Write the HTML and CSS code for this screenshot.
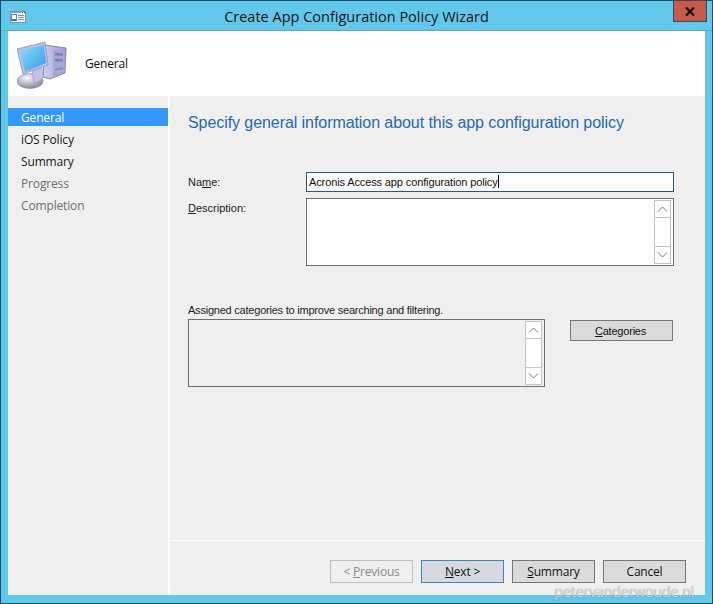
FILE: index.html
```html
<!DOCTYPE html>
<html lang="en">
<head>
<meta charset="utf-8">
<title>Create App Configuration Policy Wizard</title>
<link rel="stylesheet" href="styles.css">
</head>
<body>
<div class="window">
  <div class="titlebar">
    <svg class="app-icon" width="16" height="12" viewBox="0 0 16 12">
      <rect x="0.5" y="0.5" width="15" height="11" fill="#eef3fa" stroke="#7f93ad"/>
      <path d="M1 1.500H11" stroke="#8aa3c6"/>
      <path d="M12 1.500h1M14 1.500h1" stroke="#333"/>
      <rect x="1.500" y="3.500" width="5" height="6" fill="#fff" stroke="#5d84c0"/>
      <rect x="2" y="8" width="4" height="2" fill="#3f6fb5"/>
      <path d="M8 4.500h6M8 6.500h6M8 8.500h6" stroke="#7f8ea3"/>
    </svg>
    <div class="title">Create App Configuration Policy Wizard</div>
    <div class="close">
      <svg width="10" height="9" viewBox="0 0 10 9"><path d="M1 .5 L9 8.5 M9 .5 L1 8.5" stroke="#111" stroke-width="2.2"/></svg>
    </div>
  </div>
  <div class="client">
    <header class="banner">
      <svg class="computer" width="52" height="50" viewBox="0 0 52 50">
        <defs>
          <linearGradient id="screen" x1="0" y1="0" x2="1" y2="1"><stop offset="0" stop-color="#93dcfc"/><stop offset="1" stop-color="#2f9be8"/></linearGradient>
          <linearGradient id="tower" x1="0" y1="0" x2="1" y2="0"><stop offset="0" stop-color="#cfd0ee"/><stop offset="1" stop-color="#9a9cce"/></linearGradient>
          <radialGradient id="foot" cx=".4" cy=".3" r=".85"><stop offset="0" stop-color="#f8f8fc"/><stop offset="1" stop-color="#6f7388"/></radialGradient>
        </defs>
        <path d="M28 4 L49 7 L48 32 L33 38 L26 36 Z" fill="url(#tower)" stroke="#6f70a6" stroke-width=".8"/>
        <path d="M36 9 L48 10 L47.500 31 L36 35 Z" fill="#a6a8d6"/>
        <path d="M38 13 L46 13.500 M38 19 L46 19.500" stroke="#7d7fb6" stroke-width="2.500"/>
        <path d="M38 29 L46 27" stroke="#8284ba" stroke-width="1.500"/>
        <ellipse cx="13" cy="40" rx="13" ry="7.500" fill="url(#foot)" stroke="#84879a" stroke-width=".6"/>
        <path d="M15 30 L25 27 L26 36 Q22 42 17 42 Z" fill="#c2c3e6" stroke="#8d8db8" stroke-width=".5"/>
        <path d="M0 8 L28 1 L31 24 L6 33 Z" fill="#b9c3e0" stroke="#7e8bb0" stroke-width=".7"/>
        <path d="M3 9.500 L27 4 L29 22 L8 31 Z" fill="url(#screen)"/>
      </svg>
      <span class="banner-label">General</span>
    </header>
    <div class="body">
      <nav class="steps">
        <div class="step current">General</div>
        <div class="step">iOS Policy</div>
        <div class="step">Summary</div>
        <div class="step muted">Progress</div>
        <div class="step muted">Completion</div>
      </nav>
      <main class="page">
        <div class="content">
          <h1 class="heading">Specify general information about this app configuration policy</h1>
          <div class="row name-row">
            <label class="label">Na<u>m</u>e:</label>
            <div class="field focused">Acronis Access app configuration policy<span class="caret"></span></div>
          </div>
          <div class="row desc-row">
            <label class="label"><u>D</u>escription:</label>
            <div class="field area">
              <div class="scrollbar">
                <span class="sb-btn"><svg width="11" height="6" viewBox="0 0 11 6"><path d="M1 5.500 L5.500 1 L10 5.500" fill="none" stroke="#777" stroke-width="1"/></svg></span>
                <span class="sb-track"></span>
                <span class="sb-btn"><svg width="11" height="6" viewBox="0 0 11 6"><path d="M1 .5 L5.500 5 L10 .5" fill="none" stroke="#777" stroke-width="1"/></svg></span>
              </div>
            </div>
          </div>
          <div class="hint">Assigned categories to improve searching and filtering.</div>
          <div class="cat-row">
            <div class="field area listbox">
              <div class="scrollbar">
                <span class="sb-btn"><svg width="11" height="6" viewBox="0 0 11 6"><path d="M1 5.500 L5.500 1 L10 5.500" fill="none" stroke="#777" stroke-width="1"/></svg></span>
                <span class="sb-track"></span>
                <span class="sb-btn"><svg width="11" height="6" viewBox="0 0 11 6"><path d="M1 .5 L5.500 5 L10 .5" fill="none" stroke="#777" stroke-width="1"/></svg></span>
              </div>
            </div>
            <button class="btn cat-btn"><u>C</u>ategories</button>
          </div>
        </div>
        <footer class="footer">
          <button class="btn wide disabled">&lt; <u>P</u>revious</button>
          <button class="btn wide default"><u>N</u>ext &gt;</button>
          <button class="btn wide"><u>S</u>ummary</button>
          <button class="btn wide">Cancel</button>
        </footer>
      </main>
    </div>
  </div>
  <div class="watermark">petervanderwoude.nl</div>
</div>
</body>
</html>
```
FILE: styles.css
```css
* { box-sizing: border-box; }
html, body { margin: 0; padding: 0; }
body { width: 713px; height: 604px; overflow: hidden; background: #62c8ea; }

.window {
  position: relative;
  width: 713px;
  height: 604px;
  display: flex;
  flex-direction: column;
  background: #62c8ea;
  border: 1px solid #1d4f68;
}

.titlebar {
  height: 30px;
  flex: none;
  display: grid;
  grid-template-columns: 1fr auto 1fr;
  align-items: start;
  border-bottom: 1px solid #5aa9c6;
}
.app-icon { margin: 10px 0 0 9px; }
.title {
  font: 14.5px/31px "Open Sans", "Noto Sans", sans-serif;
  color: #161616;
}
.close {
  justify-self: end;
  width: 34px;
  height: 22px;
  margin: -1px 5px 0 0;
  background: #c75a4b;
  border: 1px solid #3d4a55;
  display: flex;
  align-items: center;
  justify-content: center;
}

.client {
  flex: 1;
  margin: 0 7px 8px 7px;
  display: flex;
  flex-direction: column;
  min-height: 0;
  background: #fff;
}

.banner {
  height: 65px;
  flex: none;
  display: flex;
  align-items: flex-start;
  background: #fff;
}
.computer { margin: 10px 0 0 9px; }
.banner-label {
  margin: 25px 0 0 16px;
  font: 12px/16px "Open Sans", "Noto Sans", sans-serif;
  letter-spacing: -.2px;
  color: #111;
}

.body { flex: 1; display: flex; min-height: 0; }

.steps {
  width: 160px;
  flex: none;
  background: #efefef;
  padding-top: 12px;
  margin-right: 2px;
}
.step {
  height: 22px;
  padding-left: 13px;
  font: 12px/20px "Open Sans", "Noto Sans", sans-serif;
  letter-spacing: -.15px;
  color: #1a1a1a;
}
.step.current { height: 18px; margin-bottom: 4px; line-height: 19px; background: #3399ff; color: #fff; }
.step.muted { color: #6d6d6d; }

.page {
  flex: 1;
  display: flex;
  flex-direction: column;
  background: #efefef;
}
.content { flex: 1; padding: 17px 31px 0 18px; }

.heading {
  margin: 0;
  font: 400 16px/20px "Liberation Sans", Arial, sans-serif;
  letter-spacing: -.07px;
  color: #1f6ab0;
}

.row { display: flex; }
.name-row { margin-top: 39px; align-items: center; }
.desc-row { margin-top: 6px; }
.label {
  width: 118px;
  flex: none;
  font: 11px/14px "Liberation Sans", Arial, sans-serif;
  color: #222;
}
.desc-row .label { padding-top: 3px; }

.field {
  flex: 1;
  background: #fff;
  border: 1px solid #6f6f6f;
  font: 11px/18px "Liberation Sans", Arial, sans-serif;
  letter-spacing: -.12px;
  color: #111;
  padding-left: 2px;
}
.field.focused { height: 20px; border-color: #2e5a70; }
.caret {
  display: inline-block;
  width: 1px;
  height: 13px;
  vertical-align: -2px;
  background: #111;
}

.area {
  height: 68px;
  display: flex;
  justify-content: flex-end;
  padding: 1px 2px;
}
.scrollbar {
  width: 17px;
  display: flex;
  flex-direction: column;
  border: 1px solid #c4c4c4;
  background: #fff;
}
.sb-btn {
  height: 16px;
  flex: none;
  display: flex;
  align-items: center;
  justify-content: center;
}
.sb-track {
  flex: 1;
  border-top: 1px solid #c4c4c4;
  border-bottom: 1px solid #c4c4c4;
}

.hint {
  margin-top: 37px;
  font: 11px/14px "Liberation Sans", Arial, sans-serif;
  letter-spacing: -.22px;
  color: #222;
}
.cat-row { margin-top: 2px; display: flex; align-items: flex-start; }
.listbox { flex: none; width: 357px; background: #efefef; }

.btn {
  padding: 0;
  background: #dadada;
  border: 1px solid #777;
  font: 12px/20px "Open Sans", "Noto Sans", sans-serif;
  letter-spacing: -.2px;
  color: #111;
}
.cat-btn {
  width: 103px;
  height: 21px;
  margin: 1px 0 0 25px;
  padding-right: 2px;
  font: 11px/20px "Liberation Sans", Arial, sans-serif;
  letter-spacing: -.2px;
}

.footer {
  height: 55px;
  flex: none;
  display: flex;
  justify-content: flex-end;
  gap: 8px;
  padding: 19px 19px 0 0;
  border-top: 1px solid #fff;
}
.wide { width: 83px; height: 23px; }
.btn.disabled { background: #efefef; border-color: #bdbdbd; color: #8a8a8a; }
.btn.default { background: #d6dae0; border-color: #3f86b5; }

.watermark {
  position: absolute;
  right: 18px;
  bottom: 0;
  font: 300 14.5px/22px "Open Sans", "Noto Sans", sans-serif;
  color: #f7f7f7;
  text-shadow: 0 0 1px #333;
}
```
